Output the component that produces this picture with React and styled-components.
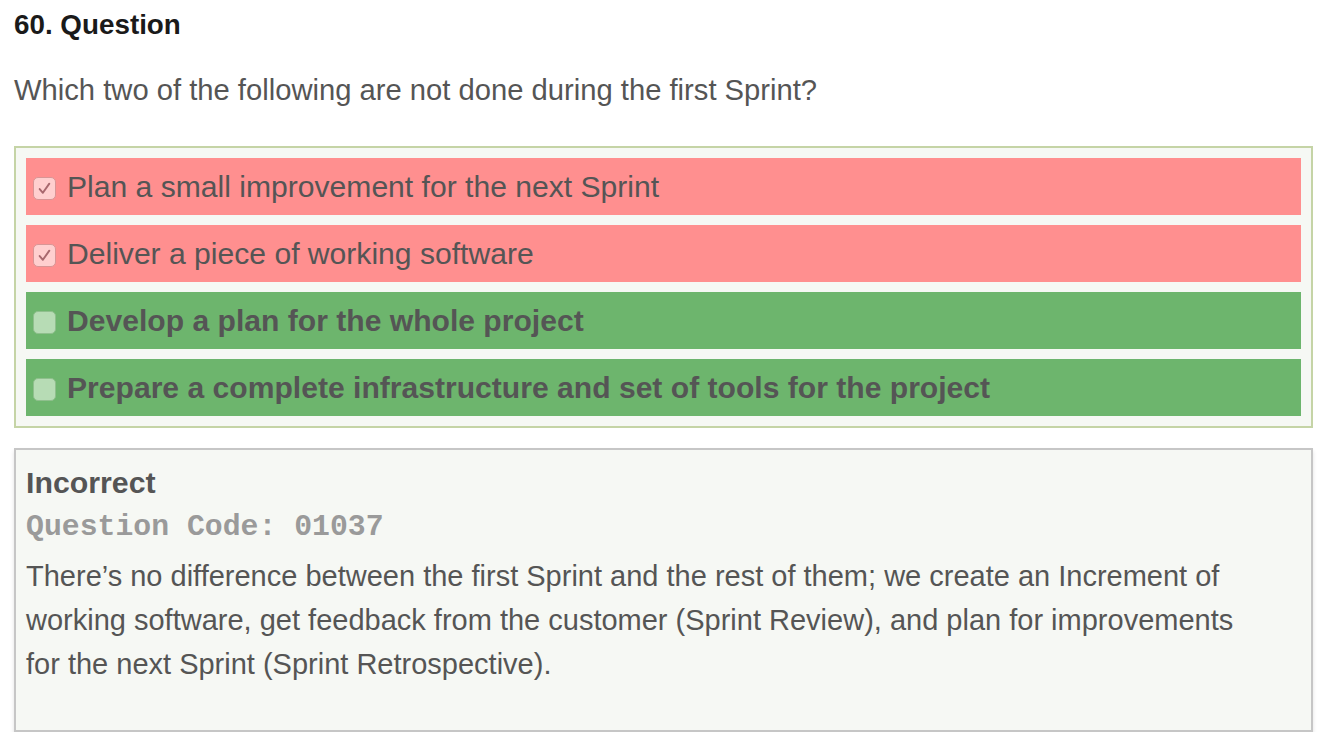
import React from "react";
import styled, { createGlobalStyle } from "styled-components";

const Global = createGlobalStyle`
  html, body { margin: 0; padding: 0; background: #ffffff; }
  body { font-family: "Liberation Sans", Arial, sans-serif; }
`;

const Page = styled.div`
  padding: 8px 11px 0 14px;
  color: #555555;
`;

const Title = styled.h2`
  margin: 0;
  font-size: 27.8px;
  line-height: 34px;
  font-weight: 700;
  color: #1a1a1a;
`;

const Prompt = styled.p`
  margin: 30px 0 0 0;
  font-size: 29.2px;
  line-height: 36px;
  color: #555555;
`;

const Options = styled.div`
  margin-top: 38px;
  border: 2px solid #c5d4a6;
  background: #f6f8f4;
  padding: 10px;
  display: flex;
  flex-direction: column;
  gap: 10px;
`;

const Option = styled.label`
  display: flex;
  align-items: center;
  gap: 11px;
  height: 57px;
  padding: 0 7px;
  background: ${(p) => (p.$correct ? "#6db56d" : "#ff8f8f")};
  font-size: 30.1px;
  font-weight: ${(p) => (p.$correct ? 700 : 400)};
  color: #555555;
`;

const Box = styled.span`
  flex: none;
  width: 23px;
  height: 23px;
  margin-top: 3px;
  border-radius: 5px;
  box-sizing: border-box;
  display: flex;
  align-items: center;
  justify-content: center;
  background: ${(p) => (p.$correct ? "#b7dcb5" : "#ffcfcf")};
  border: 1px solid ${(p) => (p.$correct ? "#8fbf8d" : "#d99595")};
`;

const Feedback = styled.div`
  margin-top: 20px;
  border: 2px solid #c6c6c6;
  background: #f6f8f4;
  box-shadow: 0 3px 4px rgba(0, 0, 0, 0.12);
  padding: 16px 10px 0 10px;
  height: 284px;
  box-sizing: border-box;
`;

const Verdict = styled.div`
  font-size: 30.3px;
  font-weight: 700;
  line-height: 34px;
  color: #555555;
`;

const Code = styled.div`
  margin-top: 6px;
  font-family: "Liberation Mono", "Courier New", monospace;
  font-weight: 700;
  font-size: 29.8px;
  line-height: 42px;
  color: #9a9a9a;
`;

const Explanation = styled.p`
  margin: 6px 0 0 0;
  font-size: 29px;
  line-height: 44px;
  color: #555555;
  max-width: 1225px;
`;

const Check = () => (
  <svg width="15" height="15" viewBox="0 0 14 14">
    <path d="M2.5 7.5 L5.5 11 L11.5 2.5" fill="none" stroke="#a8686e" strokeWidth="1.8" strokeLinecap="round" strokeLinejoin="round" />
  </svg>
);

const options = [
  { text: "Plan a small improvement for the next Sprint", checked: true, correct: false },
  { text: "Deliver a piece of working software", checked: true, correct: false },
  { text: "Develop a plan for the whole project", checked: false, correct: true },
  { text: "Prepare a complete infrastructure and set of tools for the project", checked: false, correct: true },
];

export default function App() {
  return (
    <>
      <Global />
      <Page>
        <Title>60. Question</Title>
        <Prompt>Which two of the following are not done during the first Sprint?</Prompt>
        <Options>
          {options.map((o) => (
            <Option key={o.text} $correct={o.correct}>
              <Box $correct={o.correct}>{o.checked && <Check />}</Box>
              {o.text}
            </Option>
          ))}
        </Options>
        <Feedback>
          <Verdict>Incorrect</Verdict>
          <Code>Question Code: 01037</Code>
          <Explanation>
            There’s no difference between the first Sprint and the rest of them; we create an Increment of
            working software, get feedback from the customer (Sprint Review), and plan for improvements
            for the next Sprint (Sprint Retrospective).
          </Explanation>
        </Feedback>
      </Page>
    </>
  );
}
